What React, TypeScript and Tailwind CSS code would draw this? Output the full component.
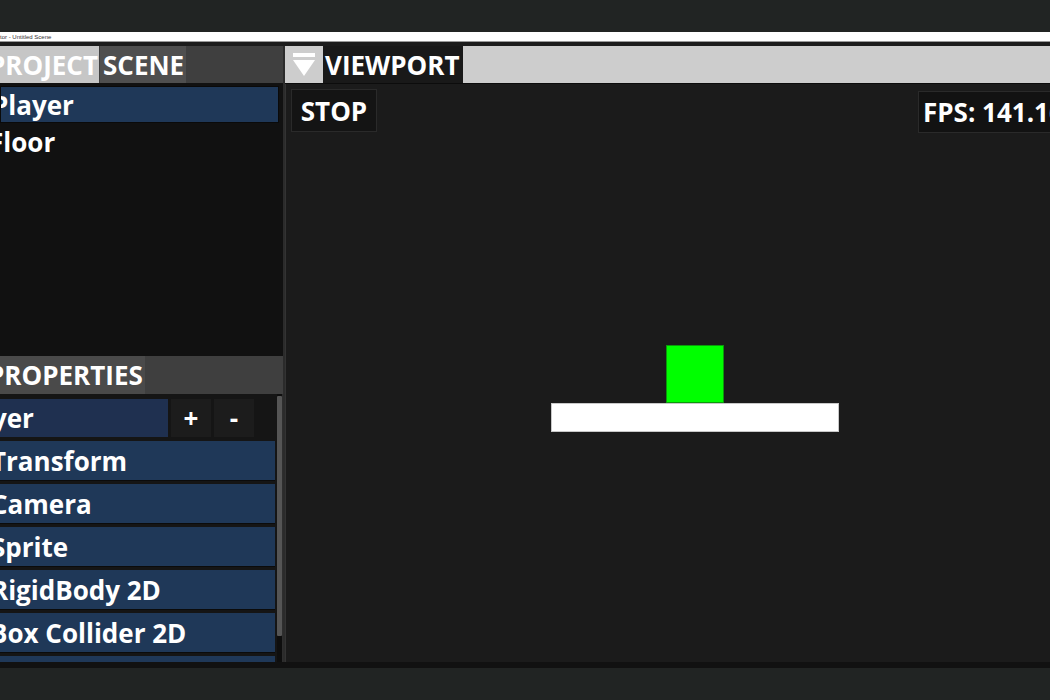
import React from "react";

const rowText = "text-white font-bold text-[26px] leading-none whitespace-nowrap";

function CompRow({ label, offset = "-ml-[9px]" }: { label: string; offset?: string }) {
  return (
    <div className="h-[40px] w-[275px] shrink-0 bg-[#1f3858] border-b border-[#0b0b0b] flex items-center overflow-hidden">
      <span className={`${rowText} ${offset}`}>{label}</span>
    </div>
  );
}

export default function App() {
  return (
    <div className="w-[1050px] h-[700px] bg-[#212423] flex flex-col overflow-hidden font-['Open_Sans',sans-serif]">
      <div className="h-[32px] shrink-0" />
      <div className="h-[9px] shrink-0 bg-white flex items-center overflow-hidden">
        <span className="text-[6px] leading-none text-[#333] font-['Liberation_Sans',sans-serif] whitespace-nowrap">tor - Untitled Scene</span>
      </div>
      <div className="h-[1px] shrink-0 bg-[#9a9a9a]" />
      <div className="h-[4px] shrink-0 bg-[#1c1c1c]" />
      <div className="h-[616px] shrink-0 flex">
        {/* Left column */}
        <div className="w-[283px] shrink-0 flex flex-col bg-[#111]">
          <div className="h-[37px] shrink-0 bg-[#3f3f3f] flex overflow-hidden">
            <div className="w-[99px] bg-[#c6c6c6] flex items-center overflow-hidden">
              <span className={`${rowText} -ml-[11px]`}>PROJECT</span>
            </div>
            <div className="ml-[1px] w-[86px] bg-[#4f4f4f] flex items-center pl-[3px]">
              <span className={rowText}>SCENE</span>
            </div>
          </div>
          <div className="h-[273px] shrink-0 bg-[#111] pt-[3px] flex flex-col">
            <div className="h-[37px] w-[279px] bg-[#1f3858] border border-[#0a0a0a] flex items-center overflow-hidden">
              <span className={`${rowText} -ml-[9px]`}>Player</span>
            </div>
            <div className="h-[38px] w-[279px] flex items-center overflow-hidden">
              <span className={`${rowText} -ml-[11px]`}>Floor</span>
            </div>
          </div>
          <div className="h-[38px] shrink-0 bg-[#3f3f3f] flex">
            <div className="w-[145px] bg-[#4a4a4a] flex items-center overflow-hidden">
              <span className={`${rowText} -ml-[12px]`}>PROPERTIES</span>
            </div>
          </div>
          <div className="flex-1 flex bg-[#151515] overflow-hidden">
            <div className="w-[277px] shrink-0 flex flex-col gap-[3px] pt-[5px] overflow-hidden">
              <div className="flex gap-[3px] h-[38px] shrink-0 mb-[1px]">
                <div className="w-[168px] bg-[#1f3050] flex items-center overflow-hidden">
                  <span className={`${rowText} -ml-[48px]`}>Player</span>
                </div>
                <div className="w-[40px] bg-[#1c1c1c] flex items-center justify-center">
                  <span className={rowText}>+</span>
                </div>
                <div className="w-[40px] bg-[#1c1c1c] flex items-center justify-center">
                  <span className={rowText}>-</span>
                </div>
              </div>
              <CompRow label="Transform" />
              <CompRow label="Camera" />
              <CompRow label="Sprite" />
              <CompRow label="RigidBody 2D" />
              <CompRow label="Box Collider 2D" offset="-ml-[10px]" />
              <CompRow label="Circle Collider 2D" offset="-ml-[10px]" />
            </div>
            <div className="w-[6px] shrink-0 bg-[#0e0e0e] pt-[2px] border-r border-[#2e2e2e]">
              <div className="w-[5px] h-[240px] bg-[#555] rounded-[1px]" />
            </div>
          </div>
        </div>
        {/* Separator */}
        <div className="w-[2px] shrink-0 bg-[#2b2b2b]" />
        {/* Right column */}
        <div className="flex-1 flex flex-col min-w-0">
          <div className="h-[37px] shrink-0 bg-[#cdcdcd] flex">
            <div className="w-[38px] flex items-center justify-center">
              <svg width="22" height="26" viewBox="0 0 22 26">
                <rect x="0" y="1" width="22" height="4" fill="#ffffff" />
                <polygon points="0,8 22,8 11,24" fill="#ffffff" />
              </svg>
            </div>
            <div className="w-[140px] bg-[#191919] flex items-center pl-[2px]">
              <span className={rowText}>VIEWPORT</span>
            </div>
          </div>
          <div className="h-[1px] shrink-0 bg-[#0c0c0c]" />
          <div className="flex-1 relative bg-[#1b1b1b] border-l border-[#333] overflow-hidden">
            <div className="absolute left-[5px] top-[5px] w-[86px] h-[43px] bg-[#141414] border border-[#2a2a2a] flex items-center justify-center">
              <span className={rowText}>STOP</span>
            </div>
            <div className="absolute left-[632px] top-[7px] w-[160px] h-[42px] bg-[#121212] border border-[#2a2a2a] flex items-center pl-[4px]">
              <span className={rowText}>FPS: 141.16</span>
            </div>
            <div className="absolute left-[380px] top-[261px] w-[58px] h-[58px] bg-[#00ff00] border border-[#0a9a0a]" />
            <div className="absolute left-[265px] top-[319px] w-[288px] h-[29px] bg-white border border-[#c8c8c8]" />
          </div>
        </div>
      </div>
      <div className="h-[6px] shrink-0 bg-[#111]" />
      <div className="flex-1" />
    </div>
  );
}
